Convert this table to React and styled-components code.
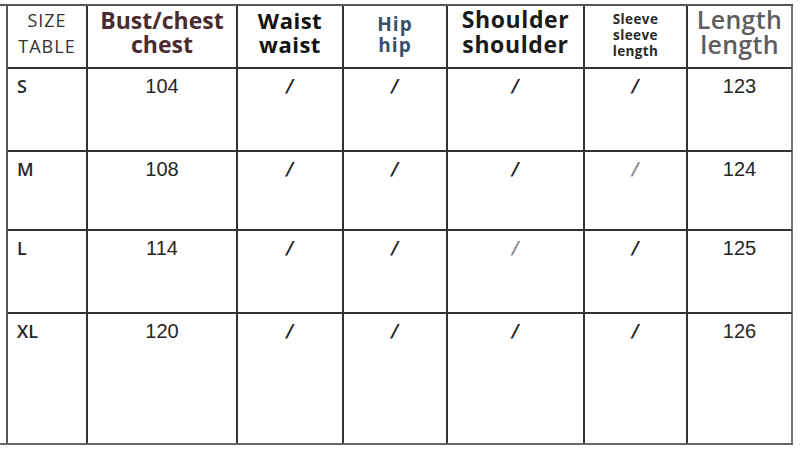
import React from "react";
import styled, { createGlobalStyle } from "styled-components";

const GlobalStyle = createGlobalStyle`
    html, body {
        margin: 0;
        padding: 0;
        background: #fff;
    }
`;

const Frame = styled.div`
    width: 793px;
    margin-top: 4px;
    border-top: 2px solid #555;
    border-bottom: 2px solid #666;
`;

const Grid = styled.div`
    margin-left: 6px;
    border-left: 2px solid #555;
    display: grid;
    grid-template-columns: 80px 150px 106px 104px 137px 103px 105px;
    grid-template-rows: 63px 83px 79px 83px 129px;
`;

const HeadCell = styled.div`
    border-right: 2px solid ${(p) => (p.$last ? "#777" : "#333")};
    border-bottom: 2px solid #333;
    display: flex;
    flex-direction: column;
    align-items: center;
    justify-content: center;
    padding-bottom: ${(p) => p.$lift ?? 10}px;
    box-sizing: border-box;
    font-family: "Open Sans", "Noto Sans", sans-serif;
    font-weight: ${(p) => p.$weight || 700};
    font-size: ${(p) => p.$size || 22}px;
    line-height: ${(p) => p.$line || 24}px;
    color: ${(p) => p.$color || "#111"};
    text-align: center;
    letter-spacing: ${(p) => p.$spacing || 0}px;
    white-space: nowrap;
`;

const Cell = styled.div`
    border-right: 2px solid ${(p) => (p.$last ? "#777" : "#333")};
    border-bottom: ${(p) => (p.$bottom ? "none" : "2px solid #333")};
    display: flex;
    justify-content: ${(p) => (p.$left ? "flex-start" : "center")};
    align-items: flex-start;
    padding: 5px 0 0 ${(p) => (p.$left ? 9 : 0)}px;
    box-sizing: border-box;
    font-family: ${(p) =>
        p.$left ? `"Open Sans", "Noto Sans", sans-serif` : `"Liberation Sans", Arial, sans-serif`};
    font-weight: ${(p) => (p.$left ? 600 : 400)};
    font-size: ${(p) => (p.$left ? 18 : 20)}px;
    line-height: 24px;
    color: #262626;
`;

const Slash = styled.span`
    font-family: "DejaVu Sans", sans-serif;
    font-weight: 700;
    font-style: italic;
    font-size: 18px;
    color: ${(p) => (p.$faint ? "#8a8a8a" : "#222")};
`;

const rows = [
    { size: "S", bust: "104", length: "123", faint: [] },
    { size: "M", bust: "108", length: "124", faint: [3] },
    { size: "L", bust: "114", length: "125", faint: [2] },
    { size: "XL", bust: "120", length: "126", faint: [] },
];

const App = () => {
    return (
        <>
            <GlobalStyle />
            <Frame>
                <Grid>
                    <HeadCell $weight={400} $size={18} $line={26} $color="#333" $lift={8} $spacing={1}>
                        <span>SIZE</span>
                        <span>TABLE</span>
                    </HeadCell>
                    <HeadCell $size={23} $color="#4b2b2e">
                        <span>Bust/chest</span>
                        <span>chest</span>
                    </HeadCell>
                    <HeadCell $spacing={0.5}>
                        <span>Waist</span>
                        <span>waist</span>
                    </HeadCell>
                    <HeadCell $size={19} $line={21} $color="#34506b" $lift={4} $spacing={1}>
                        <span>Hip</span>
                        <span>hip</span>
                    </HeadCell>
                    <HeadCell $size={23} $line={25} $color="#1a1a1a" $spacing={0.6}>
                        <span>Shoulder</span>
                        <span>shoulder</span>
                    </HeadCell>
                    <HeadCell $size={13.5} $line={16} $color="#2a2a2a" $lift={4} $spacing={0.4}>
                        <span>Sleeve</span>
                        <span>sleeve</span>
                        <span>length</span>
                    </HeadCell>
                    <HeadCell $weight={600} $size={25} $line={25} $color="#5e5e5e" $last $spacing={0.3}>
                        <span>Length</span>
                        <span>length</span>
                    </HeadCell>

                    {rows.map((r, i) => {
                        const bottom = i === rows.length - 1;
                        return (
                            <React.Fragment key={r.size}>
                                <Cell $left $bottom={bottom}>{r.size}</Cell>
                                <Cell $bottom={bottom}>{r.bust}</Cell>
                                {[0, 1, 2, 3].map((k) => (
                                    <Cell key={k} $bottom={bottom}>
                                        <Slash $faint={r.faint.includes(k)}>/</Slash>
                                    </Cell>
                                ))}
                                <Cell $bottom={bottom} $last>{r.length}</Cell>
                            </React.Fragment>
                        );
                    })}
                </Grid>
            </Frame>
        </>
    );
};

export default App;
